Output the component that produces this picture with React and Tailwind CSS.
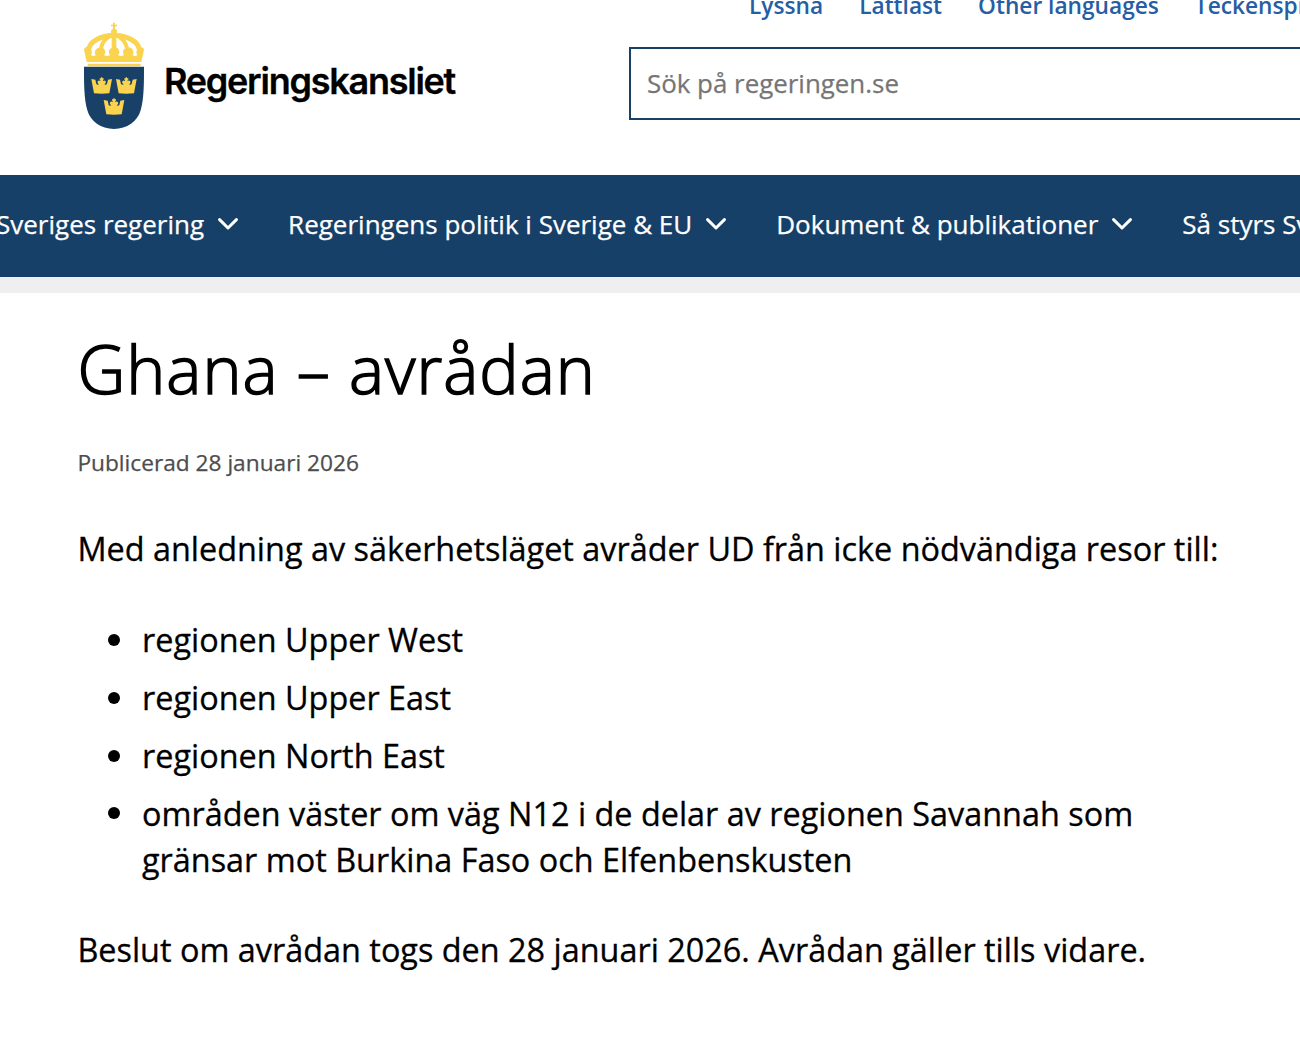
import React from "react";

function SmallCrown({ x, y }) {
  return (
    <g transform={`translate(${x} ${y})`}>
      <path d="M-31-18L-19-16L-16-3Q-12 1-8-2Q-16-8-10-13Q-6-15-4-11L-4-16H-6V-20H-2V-23H2V-20H6V-16H4L4-11Q6-15 10-13Q16-8 8-2Q12 1 16-3L19-16L31-18L23 25Q0 27-23 25Z" />
    </g>
  );
}

function Crest() {
  return (
    <svg className="w-[90px] h-[120px] shrink-0" viewBox="0 0 270 360" fill="#fbd44f">
      <path d="M42 155H222C222 205 222 250 212 286C203 319 171 342 132 342C93 342 61 319 52 286C42 250 42 205 42 155Z" fill="#194167" />
      <path d="M129 23h6v6h6v5h-6v8h-6v-8h-6v-5h6z" />
      <circle cx="132" cy="50" r="9" />
      <g fill="none" stroke="#fbd44f">
        <path d="M128 61C93 64 60 77 56 103" strokeWidth="15" />
        <path d="M136 61C171 64 204 77 208 103" strokeWidth="15" />
        <path d="M126 60C108 69 95 82 93 101" strokeWidth="12" />
        <path d="M138 60C156 69 169 82 171 101" strokeWidth="12" />
        <path d="M132 54V99" strokeWidth="14" />
      </g>
      <path d="M42 104c2-12 19-12 22 0s1 11-1 16q8 6 14 0c-4-6-3-12 1-17s20-10 25 0 3 13-1 17q9 6 18 0c-5-6-4-14 0-18s20-10 25 0 4 13-1 18q9 6 18 0c-4-5-5-12 0-17s20-10 25 0 4 11 1 17q7 6 14 0c-3-5-4-9-1-16s19-12 21 0l-8 37H50z" />
      <path d="M53 146H212V154H53z" />
      <SmallCrown x={95} y={210} />
      <SmallCrown x={169} y={210} />
      <SmallCrown x={132} y={273} />
    </svg>
  );
}

function Chevron() {
  return (
    <svg className="w-5 h-3 shrink-0 -mt-px" viewBox="0 0 20 12" fill="none" stroke="white" strokeWidth="3" strokeLinecap="round" strokeLinejoin="round">
      <path d="M1.6 1.6L10 10L18.4 1.6" />
    </svg>
  );
}

function NavItem({ children, className }) {
  return (
    <div className={`flex items-center shrink-0 gap-[14px] ${className}`}>
      <span className="whitespace-nowrap">{children}</span>
      <Chevron />
    </div>
  );
}

export default function App() {
  return (
    <div className="w-[1300px] h-[1044px] overflow-hidden bg-white text-black font-['Open_Sans',sans-serif]">
      <header className="flex h-[175px]">
        <div className="flex w-[629px] shrink-0 pl-[70px] pt-[15px]">
          <Crest />
          <div className="ml-[4px] mt-[42px] whitespace-nowrap font-['Inter',sans-serif] text-[36px] leading-[48px] font-semibold tracking-[-1.25px] [-webkit-text-stroke:0.3px_black]">
            Regeringskansliet
          </div>
        </div>
        <div className="w-[671px] shrink-0">
          <div className="flex h-[47px] gap-[36px] pl-[120px] -mt-[10px] whitespace-nowrap text-[22.7px] leading-[32px] font-semibold text-[#265ea5]">
            <a>Lyssna</a>
            <a>Lättläst</a>
            <a>Other languages</a>
            <a>Teckenspråk</a>
          </div>
          <div className="mt-[10px] flex h-[73px] w-[700px] items-center border-2 border-[#194167] pl-4 text-[25.9px] text-[#757575] [-webkit-text-stroke:0.25px_#757575]">
            Sök på regeringen.se
          </div>
        </div>
      </header>
      <nav className="flex h-[102px] items-center overflow-hidden bg-[#174068] pb-[3px] text-[26px] text-white [-webkit-text-stroke:0.25px_white]">
        <NavItem className="-ml-[4px]">Sveriges regering</NavItem>
        <NavItem className="ml-[50px]">Regeringens politik i Sverige &amp; EU</NavItem>
        <NavItem className="ml-[50px]">Dokument &amp; publikationer</NavItem>
        <NavItem className="ml-[50px]">Så styrs Sverige</NavItem>
      </nav>
      <div className="h-4 bg-[#efefef]" />
      <main className="pl-[77.4px] text-[32.4px] leading-[45.4px] [-webkit-text-stroke:0.3px_black]">
        <h1 className="pt-[30px] text-[66.2px] leading-[90px] tracking-[1px] font-light whitespace-nowrap [-webkit-text-stroke:1.5px_black]">Ghana – avrådan</h1>
        <p className="mt-[34px] text-[22.7px] leading-[32px] text-[#4d4d4d] [-webkit-text-stroke:0.25px_#4d4d4d]">Publicerad 28 januari 2026</p>
        <p className="mt-[47px] whitespace-nowrap">Med anledning av säkerhetsläget avråder UD från icke nödvändiga resor till:</p>
        <ul className="mt-[46px] flex flex-col gap-[12.6px] pl-[64.6px]">
          {["regionen Upper West", "regionen Upper East", "regionen North East"].map((t) => (
            <li key={t} className="flex items-center">
              <span className="-ml-[34px] mr-[22px] size-3 rounded-full bg-black" />
              {t}
            </li>
          ))}
          <li className="flex">
            <span className="-ml-[34px] mr-[22px] mt-[16px] size-3 shrink-0 rounded-full bg-black" />
            <span className="whitespace-nowrap">
              områden väster om väg N12 i de delar av regionen Savannah som
              <br />
              gränsar mot Burkina Faso och Elfenbenskusten
            </span>
          </li>
        </ul>
        <p className="mt-[45px] whitespace-nowrap">Beslut om avrådan togs den 28 januari 2026. Avrådan gäller tills vidare.</p>
      </main>
    </div>
  );
}
